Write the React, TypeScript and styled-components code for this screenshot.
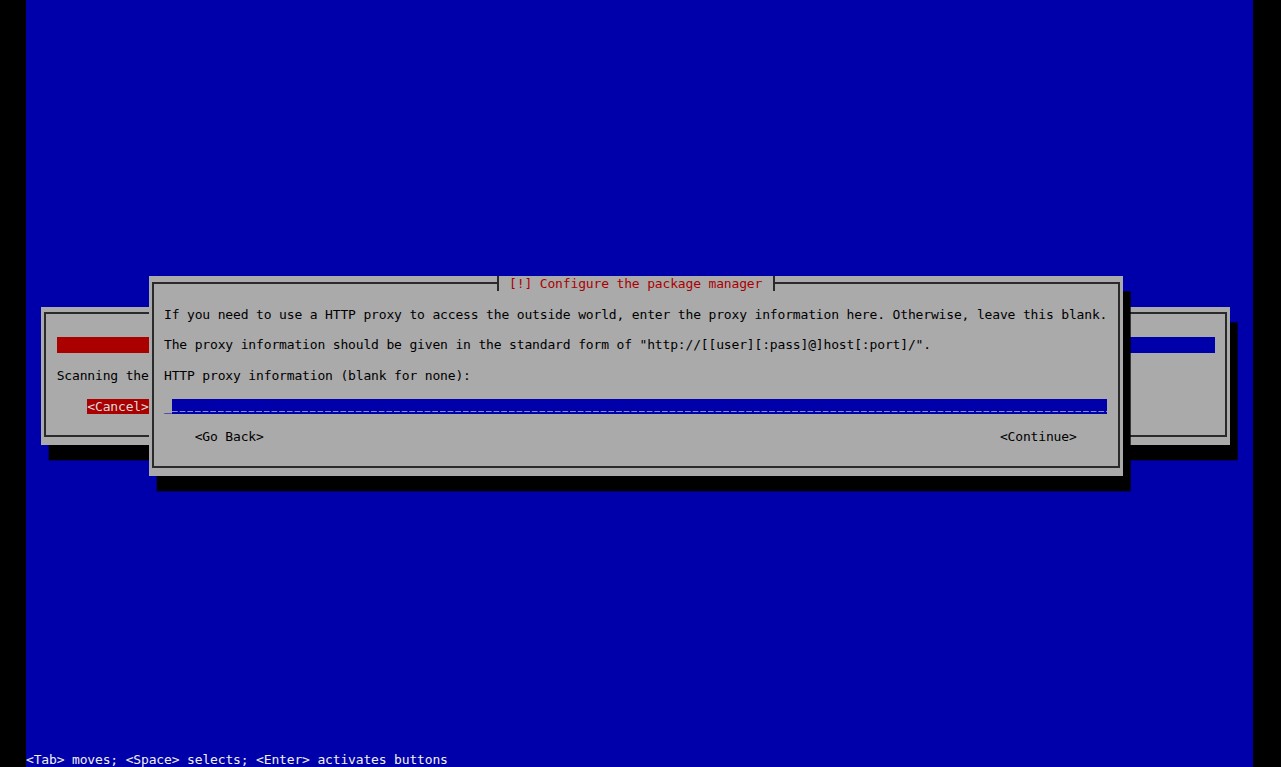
import styled, { createGlobalStyle } from "styled-components";

// text console grid: 160 x 50 cells scaled into 1227 x 767
const CW = 1227 / 160;
const RH = 767 / 50;
const cols = (n: number) => `${n * CW}px`;
const rows = (n: number) => `${n * RH}px`;

const GlobalStyle = createGlobalStyle`
    html, body {
        margin: 0;
        padding: 0;
        background: #000;
        overflow: hidden;
    }
`;

const Monitor = styled.div`
    width: 1281px;
    height: 767px;
    padding-left: 26px;
    box-sizing: border-box;
    background: #000;
`;

const Screen = styled.div`
    position: relative;
    width: ${cols(160)};
    height: ${rows(50)};
    background: #0000aa;
    display: flex;
    flex-direction: column;
    justify-content: flex-end;
    font-family: "DejaVu Sans Mono", "Liberation Mono", monospace;
    font-size: 13px;
    letter-spacing: ${CW - 13 * 0.60205}px;
    line-height: ${rows(1)};
    white-space: pre;
`;

const Window = styled.div<{ $col: number; $row: number; $w: number; $h: number }>`
    position: absolute;
    left: ${(p) => cols(p.$col)};
    top: ${(p) => rows(p.$row)};
    width: ${(p) => cols(p.$w)};
    height: ${(p) => rows(p.$h)};
    box-sizing: border-box;
    padding: 0 ${cols(2)};
    display: flex;
    flex-direction: column;
    background: #aaaaaa;
    color: #000;
    box-shadow: ${CW}px ${RH}px 0 0 #000;

    &::before {
        content: "";
        position: absolute;
        left: 3px;
        right: 2.5px;
        top: 5.5px;
        bottom: ${RH - 7.5}px;
        border: 2px solid #2a2a2a;
    }
`;

const TitleRow = styled.div`
    position: relative;
    z-index: 1;
    height: ${rows(1)};
    display: flex;
    justify-content: center;
`;

const Title = styled.div`
    display: flex;
    background: #aaaaaa;
    color: #aa0000;
`;

const Tee = styled.span<{ $side: "left" | "right" }>`
    position: relative;
    width: ${cols(1)};
    height: ${rows(1)};

    &::before {
        content: "";
        position: absolute;
        top: 5.5px;
        height: 2px;
        background: #2a2a2a;
        ${(p) => (p.$side === "left" ? "left: 0; right: 50%;" : "left: 50%; right: 0;")}
    }

    &::after {
        content: "";
        position: absolute;
        top: 0;
        bottom: 0;
        left: calc(50% - 1px);
        width: 2px;
        background: #2a2a2a;
    }
`;

const Body = styled.div<{ $offset: number }>`
    margin-top: ${(p) => rows(p.$offset)};
    display: flex;
    flex-direction: column;
    gap: ${rows(1)};
`;

const Line = styled.div`
    height: ${rows(1)};
`;

const FieldRow = styled.div`
    display: flex;
    height: ${rows(1)};
`;

const Cursor = styled.span`
    width: ${cols(1)};
    color: #0000aa;
`;

// empty entry: blue cells filled with underscores
const Entry = styled.span`
    flex: 1;
    background-color: #0000aa;
    background-image: linear-gradient(
        to right,
        #8c8cd8 0,
        #8c8cd8 ${CW - 1.5}px,
        transparent ${CW - 1.5}px
    );
    background-size: ${CW}px 1px;
    background-position: 0 calc(100% - 2px);
    background-repeat: repeat-x;
`;

const Buttons = styled.div`
    display: flex;
    justify-content: space-between;
    height: ${rows(1)};
    padding: 0 ${cols(4)};
`;

const Progress = styled.div`
    display: flex;
    height: ${rows(1)};
`;

const Bar = styled.span<{ $fill?: boolean }>`
    flex: ${(p) => (p.$fill ? "0 0 40%" : "1")};
    background: ${(p) => (p.$fill ? "#aa0000" : "#0000aa")};
`;

const ActiveButton = styled.span`
    align-self: flex-start;
    margin-left: ${cols(4)};
    background: #aa0000;
    color: #dcdcdc;
`;

const HelpLine = styled.div`
    height: ${rows(1)};
    color: #f0f0f0;
`;

const App = () => {
    return (
        <Monitor>
            <GlobalStyle />
            <Screen>
                <Window $col={2} $row={20} $w={155} $h={9}>
                    <Body $offset={2}>
                        <Progress>
                            <Bar $fill />
                            <Bar />
                        </Progress>
                        <Line>Scanning the</Line>
                        <ActiveButton>{"<Cancel>"}</ActiveButton>
                    </Body>
                </Window>

                <Window $col={16} $row={18} $w={127} $h={13}>
                    <TitleRow>
                        <Title>
                            <Tee $side="left" />
                            {" [!] Configure the package manager "}
                            <Tee $side="right" />
                        </Title>
                    </TitleRow>
                    <Body $offset={1}>
                        <Line>
                            If you need to use a HTTP proxy to access the outside world, enter the proxy
                            information here. Otherwise, leave this blank.
                        </Line>
                        <Line>
                            The proxy information should be given in the standard form of
                            "http://[[user][:pass]@]host[:port]/".
                        </Line>
                        <Line>HTTP proxy information (blank for none):</Line>
                        <FieldRow>
                            <Cursor>_</Cursor>
                            <Entry />
                        </FieldRow>
                        <Buttons>
                            <span>{"<Go Back>"}</span>
                            <span>{"<Continue>"}</span>
                        </Buttons>
                    </Body>
                </Window>

                <HelpLine>{"<Tab> moves; <Space> selects; <Enter> activates buttons"}</HelpLine>
            </Screen>
        </Monitor>
    );
};

export default App;
